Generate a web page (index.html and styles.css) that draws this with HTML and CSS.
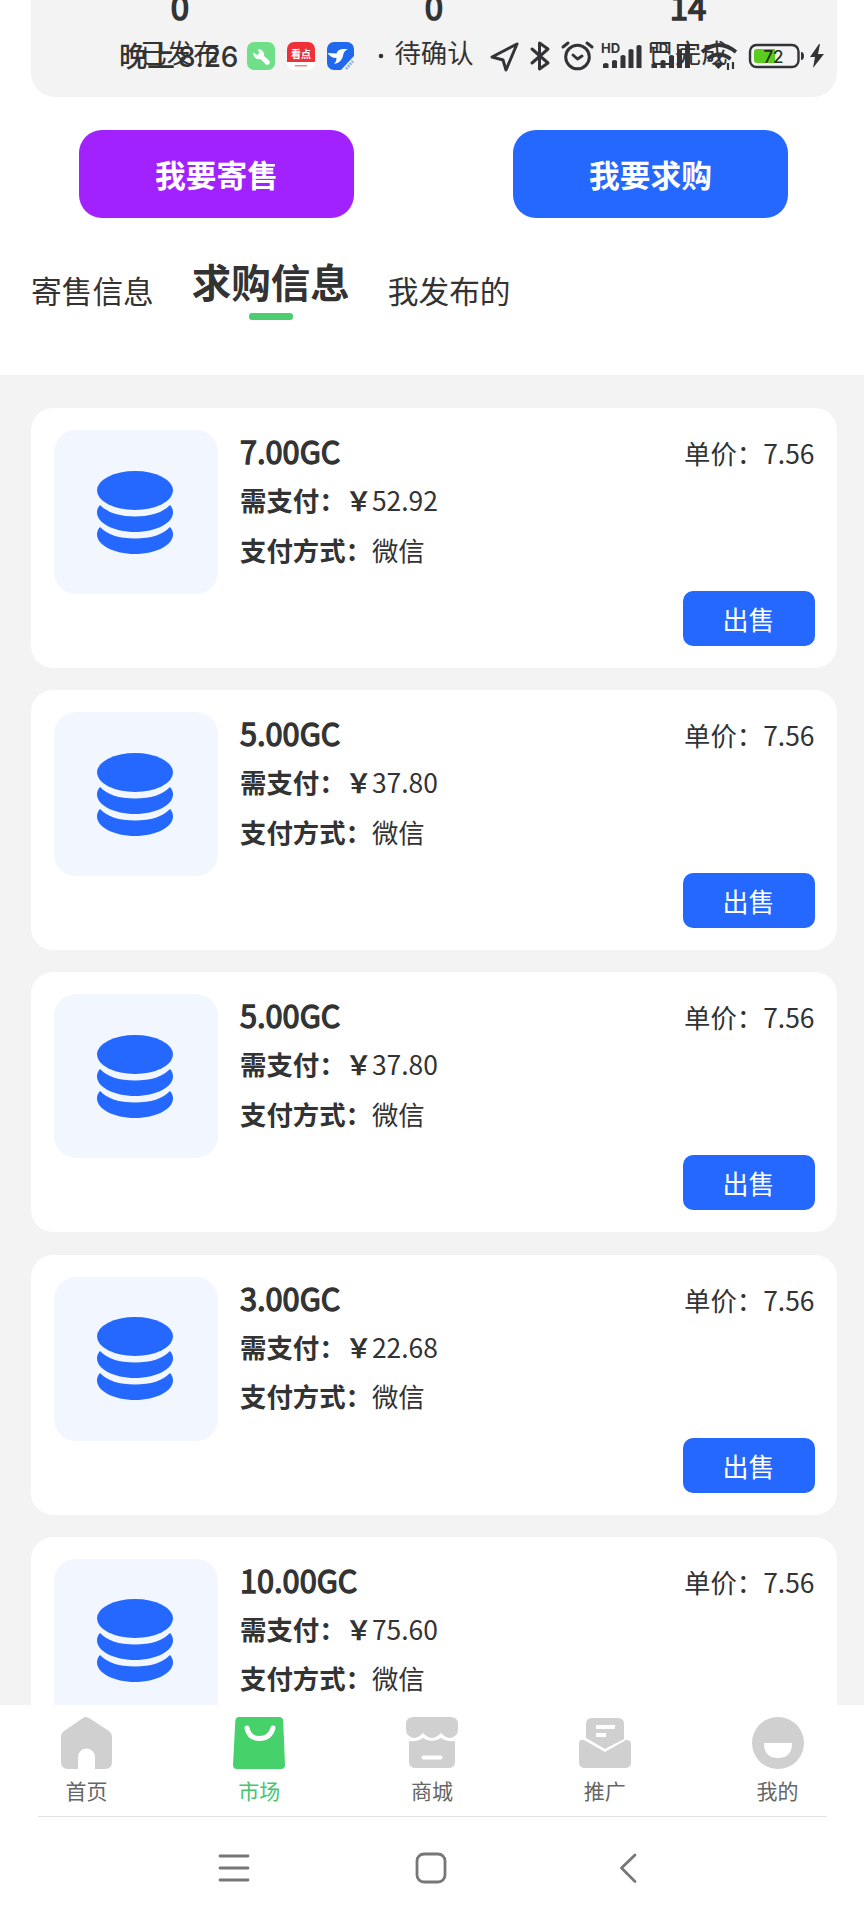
FILE: index.html
```
<!DOCTYPE html>
<html lang="zh-CN">
<head>
<meta charset="utf-8">
<title>求购信息</title>
<link rel="stylesheet" href="styles.css">
</head>
<body>
<div class="phone">
  <svg width="0" height="0" class="defs">
    <symbol id="coins" viewBox="0 0 76 83">
      <ellipse cx="38" cy="19.5" rx="38" ry="19.5"/>
      <path d="M3 34Q14 45.500 38 45.500T73 34C75.500 37 76 39 76 41.500C76 52 59 61 38 61S0 52 0 41.500C0 39 0.500 37 3 34Z"/>
      <path d="M3 56Q14 67.500 38 67.500T73 56C75.500 59 76 61 76 63.500C76 74 59 83 38 83S0 74 0 63.500C0 61 0.500 59 3 56Z"/>
    </symbol>
  </svg>

  <header class="status">
    <span class="time">晚上<i>8:26</i></span>
    <svg class="status-icons" width="600" height="40" viewBox="240 36 600 40">
      <rect x="247" y="42" width="28" height="28" rx="7" fill="#6fe089"/>
      <path d="M257.500 49.500a5.500 5.500 0 0 1 6.500 6.500l5 4.500a2.300 2.300 0 0 1-3.500 3.500l-5-5a5.500 5.500 0 0 1-7-6.500l3.500 2.500 2.500-2z" fill="#fff"/>
      <rect x="287" y="42" width="28" height="28" rx="7" fill="#fff"/>
      <path d="M294 42h14a7 7 0 0 1 7 7v13h-28V49a7 7 0 0 1 7-7z" fill="#ee3038"/>
      <text x="301" y="58" class="app-name">看点</text>
      <rect x="295" y="65" width="12" height="1.500" fill="#e88"/>
      <path d="M334 42h13a7 7 0 0 1 7 7v7L341 70h-7a7 7 0 0 1-7-7V49a7 7 0 0 1 7-7z" fill="#2068ee"/>
      <path d="M327.500 53q6 0 9 .5 1-4 6-4.500h5.500q-4 2-4.500 5-1.500 9-9.500 10 3-3 2.500-6-6 0-9-5z" fill="#fff"/>
      <path d="M346 69l7-8" stroke="#8fb4e6" stroke-width="3" stroke-dasharray="2 1"/>
      <circle cx="381" cy="56" r="2.300" fill="#333"/>
      <g fill="none" stroke="#333437" stroke-width="3" stroke-linejoin="round" stroke-linecap="round">
        <path d="M517 44L492 57l11 3 3 10z"/>
        <path d="M532 49l16 14-8.500 6V43l8.500 6-16 14"/>
        <circle cx="577.500" cy="57" r="11.800"/>
        <path d="M573 55l4.500 4 4.500-3M563 47l5-4M592 47l-5-4"/>
      </g>
      <g class="hd"><text x="601" y="53">HD</text><text x="649" y="53">HD</text></g>
      <g fill="#333437">
        <path id="bars" d="M603 68v-4q3-2 5.500 0v4zM612 68v-7q2.500-2 5 0v7zM620.500 68V56q2.500-2 5 0v12zM628.500 68V50q2.500-2 5 0v18zM636.500 68V46q2.500-2 5 0v22z"/>
        <use href="#bars" x="48.500"/>
        <path d="M713.500 64q5-3.500 10 0l-5 5z"/>
        <path d="M801 52q3 0 3 4t-3 4z"/>
        <path d="M819 44l-9 13h5l-2 11 11-14h-6l2-10z"/>
      </g>
      <g fill="none" stroke="#333437" stroke-width="3.800">
        <path d="M702 52q17-14 34 0M707.500 59q11.500-9 23 0"/>
        <path d="M728 63v7M733 62v7" stroke-width="2.200"/>
      </g>
      <rect x="750" y="45" width="48.500" height="22" rx="6.500" fill="none" stroke="#333437" stroke-width="2.400"/>
      <path d="M757 49h18v14h-18q-3 0-3-3v-8q0-3 3-3z" fill="#5bcb20"/>
      <text x="773.500" y="62.500" class="level">72</text>
    </svg>
  </header>

  <section class="top">
    <div class="summary">
      <div class="stat"><b>0</b><span>已发布</span></div>
      <div class="stat"><b>0</b><span>待确认</span></div>
      <div class="stat"><b>14</b><span>已完成</span></div>
    </div>
    <div class="actions">
      <button class="action consign">我要寄售</button>
      <button class="action buy">我要求购</button>
    </div>
    <nav class="tabs">
      <a class="tab">寄售信息</a>
      <a class="tab active">求购信息</a>
      <a class="tab">我发布的</a>
    </nav>
  </section>

  <main class="list">
    <article class="card">
      <div class="thumb"><svg width="76" height="83"><use href="#coins"/></svg></div>
      <div class="info"><h2>7.00GC</h2><p><b>需支付：￥</b>52.92</p><p><b>支付方式：</b>微信</p></div>
      <div class="side"><span>单价：7.56</span><button class="sell">出售</button></div>
    </article>
    <article class="card">
      <div class="thumb"><svg width="76" height="83"><use href="#coins"/></svg></div>
      <div class="info"><h2>5.00GC</h2><p><b>需支付：￥</b>37.80</p><p><b>支付方式：</b>微信</p></div>
      <div class="side"><span>单价：7.56</span><button class="sell">出售</button></div>
    </article>
    <article class="card">
      <div class="thumb"><svg width="76" height="83"><use href="#coins"/></svg></div>
      <div class="info"><h2>5.00GC</h2><p><b>需支付：￥</b>37.80</p><p><b>支付方式：</b>微信</p></div>
      <div class="side"><span>单价：7.56</span><button class="sell">出售</button></div>
    </article>
    <article class="card">
      <div class="thumb"><svg width="76" height="83"><use href="#coins"/></svg></div>
      <div class="info"><h2>3.00GC</h2><p><b>需支付：￥</b>22.68</p><p><b>支付方式：</b>微信</p></div>
      <div class="side"><span>单价：7.56</span><button class="sell">出售</button></div>
    </article>
    <article class="card">
      <div class="thumb"><svg width="76" height="83"><use href="#coins"/></svg></div>
      <div class="info"><h2>10.00GC</h2><p><b>需支付：￥</b>75.60</p><p><b>支付方式：</b>微信</p></div>
      <div class="side"><span>单价：7.56</span></div>
    </article>
  </main>

  <footer class="bottom">
    <nav class="tabbar">
      <a class="item"><svg width="54" height="54" viewBox="0 0 54 54"><path fill="#d0d0d0" d="M24 2q3-2 6 0l20 13q3 2 3 5v26q0 7-7 7H36V41a8.500 8.500 0 0 0-17 0v12H9q-7 0-7-7V20q0-3 3-5z"/></svg>首页</a>
      <a class="item on"><svg width="54" height="54" viewBox="0 0 54 54"><path fill="#46d16b" d="M7 1h40q4 0 4.200 4L53 49q0 4-4 4H5q-4 0-4-4L3.300 5Q3.500 1 7 1z"/><path d="M15 12q2 10.500 12.500 10.500T41 12" fill="none" stroke="#fff" stroke-width="5" stroke-linecap="round"/></svg>市场</a>
      <a class="item"><svg width="54" height="54" viewBox="0 0 54 54"><path fill="#d0d0d0" d="M9 1h36q8 0 8 7v5q0 8-8 9-4 0-9-5-5 5-9 5t-9-5q-5 5-9 5-8-1-8-9V8q0-7 8-7zM4 25q8 1 14-3 9 6 18 0 6 4 14 3v21q0 6-7 6H11q-7 0-7-6z"/><path d="M18.500 41.500h17" stroke="#fff" stroke-width="4" stroke-linecap="round"/></svg>商城</a>
      <a class="item"><svg width="54" height="54" viewBox="0 0 54 54"><path fill="#d0d0d0" d="M14 2h26q6 0 6 6v15L27 33 8 22V8q0-6 6-6zM1 28q0-5 5-4l21 12 21-12q5 0 5 4v18q0 6-6 6H7q-6 0-6-6z"/><path d="M18 11h19M18 19h10" stroke="#fff" stroke-width="4"/></svg>推广</a>
      <a class="item"><svg width="54" height="54" viewBox="0 0 54 54"><circle cx="27" cy="27" r="26" fill="#d0d0d0"/><path fill="#fff" d="M13 27h28q0 15-14 15T13 27z"/></svg>我的</a>
    </nav>
    <div class="system">
      <svg width="32" height="32" viewBox="0 0 32 32"><path d="M2 4h28M2 16h28M2 28h28"/></svg>
      <svg width="32" height="32" viewBox="0 0 32 32"><rect x="2" y="2" width="28" height="28" rx="7"/></svg>
      <svg width="32" height="32" viewBox="0 0 32 32"><path d="M23 3L9.500 16 23 29.500"/></svg>
    </div>
  </footer>
</div>
</body>
</html>
```
FILE: styles.css
```
* { box-sizing: border-box; }
body {
  margin: 0;
  background: #f3f3f3;
  color: #333;
  font-family: "Noto Sans CJK SC", sans-serif;
}
h2, p { margin: 0; }
button { border: 0; padding: 0; color: #fff; font-family: inherit; }
.defs { position: absolute; }
.phone {
  position: relative;
  display: flex;
  flex-direction: column;
  width: 864px;
  height: 1920px;
  overflow: hidden;
}
.status {
  position: absolute;
  top: 36px;
  left: 119px;
  display: flex;
  height: 40px;
  z-index: 2;
}
.time { width: 121px; font-size: 28px; line-height: 38px; font-weight: 500; white-space: nowrap; }
.time i { margin-left: 3px; font-style: normal; font-family: Inter, sans-serif; letter-spacing: -0.2px; }
.app-name { font-size: 10px; font-weight: 700; fill: #fff; text-anchor: middle; }
.hd { font-size: 13px; font-weight: 700; font-family: Inter, sans-serif; fill: #333437; }
.level { font-size: 17px; font-weight: 500; font-family: Inter, sans-serif; fill: #26301f; text-anchor: middle; }

.top { height: 375px; flex: none; background: #fff; padding: 0 27px 0 31px; }
.summary {
  display: flex;
  justify-content: space-around;
  height: 97px;
  padding: 0 22px;
  border-radius: 0 0 24px 24px;
  background: #f3f3f3;
}
.stat { flex: 1; display: flex; flex-direction: column; align-items: center; }
.stat b { font-size: 33px; line-height: 48px; height: 50px; margin-top: -18px; font-weight: 400; -webkit-text-stroke: 1.5px #333; }
.stat span { font-size: 26.400px; line-height: 40px; }
.actions { display: flex; justify-content: space-between; padding: 33px 49px 0 48px; }
.action { width: 275px; height: 88px; border-radius: 23px; font-size: 30.700px; font-weight: 700; line-height: 88px; }
.consign { background: #a222ff; }
.buy { background: #2468ff; }
.tabs { display: flex; align-items: flex-start; gap: 38px; margin-top: 33px; }
.tab { font-size: 30.700px; line-height: 44px; margin-top: 17px; }
.tab.active {
  display: flex;
  flex-direction: column;
  align-items: center;
  gap: 2px;
  margin-top: 0;
  font-size: 39.500px;
  line-height: 60px;
  font-weight: 700;
}
.tab.active::after { content: ""; width: 44px; height: 7px; border-radius: 3px; background: #4dcc70; }

.list { flex: 1; min-height: 0; overflow: hidden; display: flex; flex-direction: column; gap: 22.200px; padding: 33px 27px 0 31px; }
.card { flex: none; display: flex; height: 260px; padding: 21px 22.500px 22px 23px; border-radius: 22px; background: #fff; }
.thumb { display: flex; align-items: center; justify-content: center; width: 164px; height: 164px; margin-top: 1px; padding-right: 2px; border-radius: 22px; background: #f1f6ff; fill: #2468ff; }
.info { margin-left: 22px; flex: 1; }
.info h2 { font-size: 30.700px; line-height: 44px; height: 46px; font-weight: 400; -webkit-text-stroke: 1.300px #333; }
.info p { font-size: 26.400px; line-height: 49.500px; }
.info b { font-weight: 700; }
.side { display: flex; flex-direction: column; justify-content: space-between; align-items: flex-end; font-size: 26.400px; line-height: 47px; }
.sell { width: 132px; height: 55px; border-radius: 10px; background: #2468ff; font-size: 26px; line-height: 55px; }

.bottom { flex: none; height: 215px; background: #fff; }
.tabbar { display: flex; height: 111px; margin: 0; padding-top: 11px; }
.item { flex: 1; display: flex; flex-direction: column; align-items: center; font-size: 21px; line-height: 32px; gap: 3.500px; color: #666; }
.item.on { color: #46c56d; }
.system { display: flex; justify-content: space-between; margin: 0 37px 0 38px; padding: 35px 183px 0 180px; border-top: 1px solid #e3e3e3; }
.system svg { fill: none; stroke: #777; stroke-width: 2.800; stroke-linecap: round; stroke-linejoin: round; }
```
